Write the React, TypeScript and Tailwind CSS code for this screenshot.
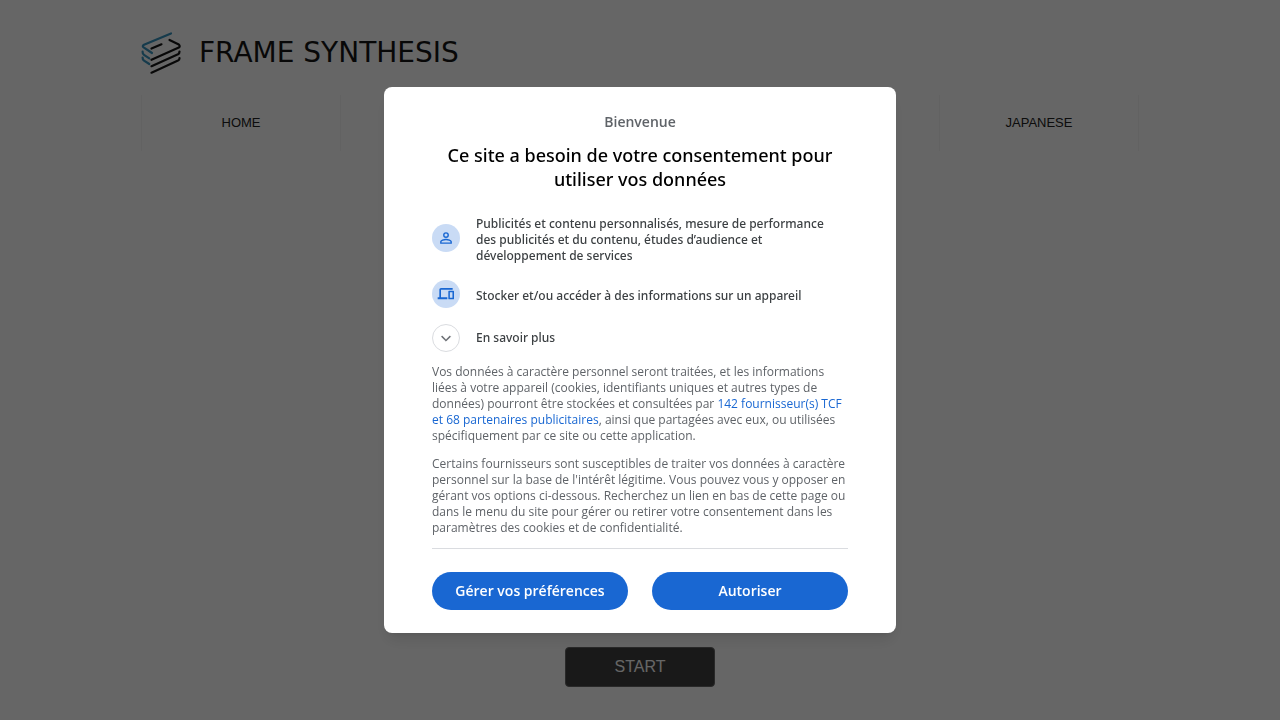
import type { ReactNode } from "react";

function LogoMark() {
  return (
    <svg width="40" height="42" viewBox="0 0 40 42" fill="none" strokeWidth="2.200" strokeLinecap="round" strokeLinejoin="round" className="shrink-0" aria-hidden="true">
      <g stroke="#3793bd">
        <path d="M30 1.500 3 12.800Q0.800 14.200 2.600 15.400L11 21" />
        <path d="M1.600 19.700Q1.500 21.800 3 22.800L8.300 26.300" />
        <path d="M1.600 25.500Q1.500 27.600 3 28.600L8.300 32" />
      </g>
      <g stroke="#161616">
        <path d="M10.500 16.500 20.500 12.300" />
        <path d="M28.500 8 37.800 12.500Q39.600 14.300 37.800 15.600L10.500 27.800" />
        <path d="M38.500 19.500Q38.600 21.300 37 22.200L10.500 34.200" />
        <path d="M38.500 26Q38.600 27.800 37 28.600L10.500 40.700" />
      </g>
    </svg>
  );
}

function NavLink({ label }: { label: string }) {
  return (
    <a
      href="#"
      className="flex h-14 w-50 items-center justify-center border-x border-[#f4f4f4] text-[13px] text-[#222]"
    >
      {label}
    </a>
  );
}

function Purpose({ icon, children }: { icon: ReactNode; children: ReactNode }) {
  return (
    <li className="flex items-center gap-4 pr-3">
      <span className="mb-1 flex size-7 shrink-0 items-center justify-center rounded-full bg-[#c9dbf5] text-[#1967d2]">
        {icon}
      </span>
      <span>{children}</span>
    </li>
  );
}

function PersonIcon() {
  return (
    <svg className="size-4" viewBox="0 0 24 24" fill="currentColor" aria-hidden="true">
      <path d="M12 5.900a2.100 2.100 0 1 1 0 4.200 2.100 2.100 0 0 1 0-4.200m0 9c2.970 0 6.100 1.460 6.100 2.100v1.100H5.900V17c0-.64 3.130-2.100 6.100-2.100M12 4a4 4 0 1 0 0 8 4 4 0 0 0 0-8m0 9c-2.670 0-8 1.340-8 4v3h16v-3c0-2.660-5.330-4-8-4" transform="translate(-1.200 -1.200) scale(1.100)" />
    </svg>
  );
}

function DevicesIcon() {
  return (
    <svg className="size-4" viewBox="0 0 24 24" fill="currentColor" overflow="visible" aria-hidden="true">
      <path d="M4.500 5.500H22V3H4.500C3.100 3 2 4.100 2 5.500V17H-.5v3H14v-3H4.500zM23 7h-6.500c-.6 0-1 .4-1 1v11c0 .6.4 1 1 1H23c.6 0 1-.4 1-1V8c0-.6-.4-1-1-1m-1.300 10.500h-3.900v-8h3.900z" />
    </svg>
  );
}

function ConsentDialog() {
  return (
    <section
      role="dialog"
      aria-modal="true"
      aria-labelledby="consent-title"
      className="w-full max-w-lg rounded-lg bg-white px-12 pt-[25px] pb-[23px] font-['Open_Sans','Noto_Sans',sans-serif] shadow-lg"
    >
      <p className="text-center text-sm leading-5 font-semibold text-[#5f6368]">Bienvenue</p>
      <h1
        id="consent-title"
        className="mt-[11px] text-center font-['Noto_Sans','Open_Sans',sans-serif] text-lg leading-6 font-medium text-black"
      >
        Ce site a besoin de votre consentement pour utiliser vos données
      </h1>

      <ul className="mt-[25px] flex flex-col gap-4 font-['Noto_Sans','Open_Sans',sans-serif] text-xs leading-4 font-medium text-[#3c4043]">
        <Purpose icon={<PersonIcon />}>
          Publicités et contenu personnalisés, mesure de performance des publicités et du contenu,
          études d’audience et développement de services
        </Purpose>
        <Purpose icon={<DevicesIcon />}>Stocker et/ou accéder à des informations sur un appareil</Purpose>
        <li className="-mt-1">
          <button type="button" className="flex items-center gap-4">
            <span className="flex size-7 items-center justify-center rounded-full border border-[#dadce0] text-[#5f6368]">
              <svg className="size-3.5" viewBox="0 0 24 24" fill="currentColor" aria-hidden="true">
                <path d="M5.400 8.300 12 14.900l6.600-6.600L20 9.700l-8 8-8-8z" stroke="currentColor" strokeWidth="0.600" />
              </svg>
            </span>
            <span>En savoir plus</span>
          </button>
        </li>
      </ul>

      <div className="mt-3 border-b border-[#dadce0] pb-3 text-xs leading-4 text-[#5f6368]">
        <p>
          Vos données à caractère personnel seront traitées, et les informations liées à votre
          appareil (cookies, identifiants uniques et autres types de données) pourront être stockées
          et consultées par{" "}
          <a href="#" className="text-[#1967d2]">
            142 fournisseur(s) TCF et 68 partenaires publicitaires
          </a>
          , ainsi que partagées avec eux, ou utilisées spécifiquement par ce site ou cette
          application.
        </p>
        <p className="mt-3">
          Certains fournisseurs sont susceptibles de traiter vos données à caractère personnel sur
          la base de l'intérêt légitime. Vous pouvez vous y opposer en gérant vos options
          ci-dessous. Recherchez un lien en bas de cette page ou dans le menu du site pour gérer ou
          retirer votre consentement dans les paramètres des cookies et de confidentialité.
        </p>
      </div>

      <div className="mt-[23px] grid grid-cols-2 gap-6 text-sm font-semibold text-white">
        <button type="button" className="h-9.5 rounded-full bg-[#1967d2]">
          Gérer vos préférences
        </button>
        <button type="button" className="h-9.5 rounded-full bg-[#1967d2]">
          Autoriser
        </button>
      </div>
    </section>
  );
}

export default function App() {
  return (
    <div className="min-h-screen bg-white font-['Liberation_Sans',Arial,sans-serif]">
      <div className="mx-auto flex min-h-screen max-w-[998px] flex-col pb-[33px]">
        <header className="pt-[31px]">
          <a href="#" className="flex h-11 items-center gap-[18px]">
            <LogoMark />
            <span className="font-['DejaVu_Sans',Verdana,sans-serif] text-[28px] leading-8 text-[#161616]">
              FRAME SYNTHESIS
            </span>
          </a>
          <nav className="mt-5 flex justify-between">
            <NavLink label="HOME" />
            <NavLink label="JAPANESE" />
          </nav>
        </header>
        <main className="mt-auto flex justify-center">
          <button type="button" className="h-10 w-[150px] rounded-sm border border-[#666] bg-[#404040] text-base text-white">
            START
          </button>
        </main>
      </div>
      <div className="fixed inset-0 flex items-center justify-center bg-black/60">
        <ConsentDialog />
      </div>
    </div>
  );
}
